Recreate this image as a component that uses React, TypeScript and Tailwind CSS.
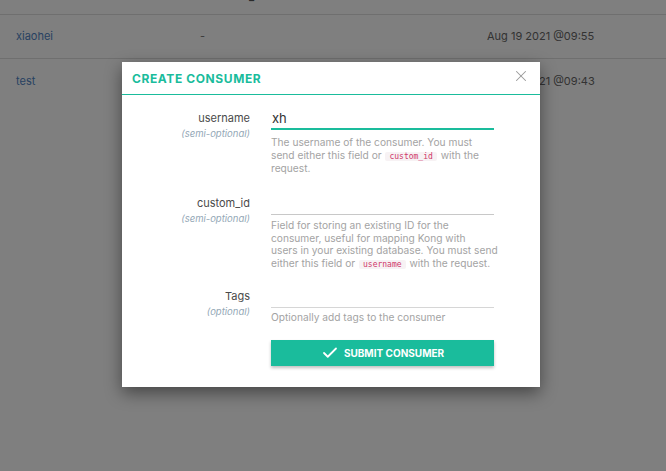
import { Check, X } from "lucide-react";

const rows = [
  { name: "xiaohei", id: "-", created: "Aug 19 2021 @09:55" },
  { name: "test", id: "", created: "Aug 19 2021 @09:43" },
];

function Code({ children }: { children: string }) {
  return (
    <code className="mx-[1px] rounded-[2px] bg-[#f7f2f4] px-[4px] font-['DejaVu_Sans_Mono',monospace] text-[8px] leading-[11px] text-[#d0386a]">
      {children}
    </code>
  );
}

function Label({ name, hint }: { name: string; hint: string }) {
  return (
    <div className="pt-px text-right">
      <div className="text-[11px] leading-[15px] text-[#4a4a4a]">{name}</div>
      <div className="text-[9.5px] italic leading-[15px] text-[#93a7b6]">{hint}</div>
    </div>
  );
}

export default function App() {
  return (
    <div className="relative h-[471px] w-[666px] overflow-hidden bg-white font-['Inter',sans-serif]">
      {/* table behind the dialog, scrolled so the header is mostly out of view */}
      <div className="flow-root h-[15px] border-b border-[#dedede]">
        <div className="-mt-[11px] grid grid-cols-[184px_184px_103px_1fr] pl-[16px] text-[11px] font-semibold leading-[14px] text-[#555]">
          <span>USERNAME</span>
          <span>CUSTOM_ID</span>
          <span>TAGS</span>
          <span>CREATED</span>
        </div>
      </div>
      {rows.map((r, i) => (
        <div
          key={r.name}
          className={`grid h-[44px] grid-cols-[184px_287px_1fr] items-center pl-[16px] text-[11px] ${i === 0 ? "border-b border-[#dedede]" : ""}`}
        >
          <span className="text-[#4f84c4]">{r.name}</span>
          <span className="text-[#777]">{r.id}</span>
          <span className="text-[#666]">{r.created}</span>
        </div>
      ))}

      <div className="absolute inset-0 bg-black/50" />

      {/* dialog */}
      <div className="absolute left-[122px] top-[62px] w-[418px] bg-white shadow-[0_6px_16px_rgba(0,0,0,0.45)]">
        <div className="flex h-[33px] items-center justify-between border-b border-[#1abc9c] pl-[10px] pr-[10px]">
          <h2 className="pt-[2px] text-[12px] font-bold tracking-[0.6px] text-[#1abc9c]">CREATE CONSUMER</h2>
          <X size={18} strokeWidth={1.4} className="-mt-[5px] text-[#999]" />
        </div>

        <div className="pb-[21px] pt-[15px]">
          <div className="grid grid-cols-[128px_223px] gap-x-[21px]">
            <Label name="username" hint="(semi-optional)" />
            <div>
              <div className="flex h-[20px] items-center border-b-2 border-[#1abc9c] pl-[1px] text-[13px] text-[#333]">xh</div>
              <p className="mt-[6px] whitespace-nowrap text-[10.2px] leading-[12.5px] text-[#a3a3a3]">
                The username of the consumer. You must
                <br />
                send either this field or <Code>custom_id</Code> with the
                <br />
                request.
              </p>
            </div>
          </div>

          <div className="mt-[21px] grid grid-cols-[128px_223px] gap-x-[21px]">
            <Label name="custom_id" hint="(semi-optional)" />
            <div>
              <div className="h-[20px] border-b border-[#c8c8c8]" />
              <p className="mt-[4px] whitespace-nowrap text-[10.2px] leading-[12.5px] text-[#a3a3a3]">
                Field for storing an existing ID for the
                <br />
                consumer, useful for mapping Kong with
                <br />
                users in your existing database. You must send
                <br />
                either this field or <Code>username</Code> with the request.
              </p>
            </div>
          </div>

          <div className="mt-[18px] grid grid-cols-[128px_223px] gap-x-[21px]">
            <Label name="Tags" hint="(optional)" />
            <div>
              <div className="h-[20px] border-b border-[#d6d6d6]" />
              <p className="mt-[3px] text-[10.2px] leading-[12.5px] text-[#a3a3a3]">Optionally add tags to the consumer</p>
            </div>
          </div>

          <div className="mt-[17px] grid grid-cols-[128px_223px] gap-x-[21px]">
            <div />
            <button className="flex h-[26px] items-center justify-center gap-[5px] bg-[#1abc9c] text-[10px] font-bold text-white shadow-[0_2px_3px_rgba(0,0,0,0.25)]">
              <Check size={18} strokeWidth={2.4} />
              SUBMIT CONSUMER
            </button>
          </div>
        </div>
      </div>
    </div>
  );
}
